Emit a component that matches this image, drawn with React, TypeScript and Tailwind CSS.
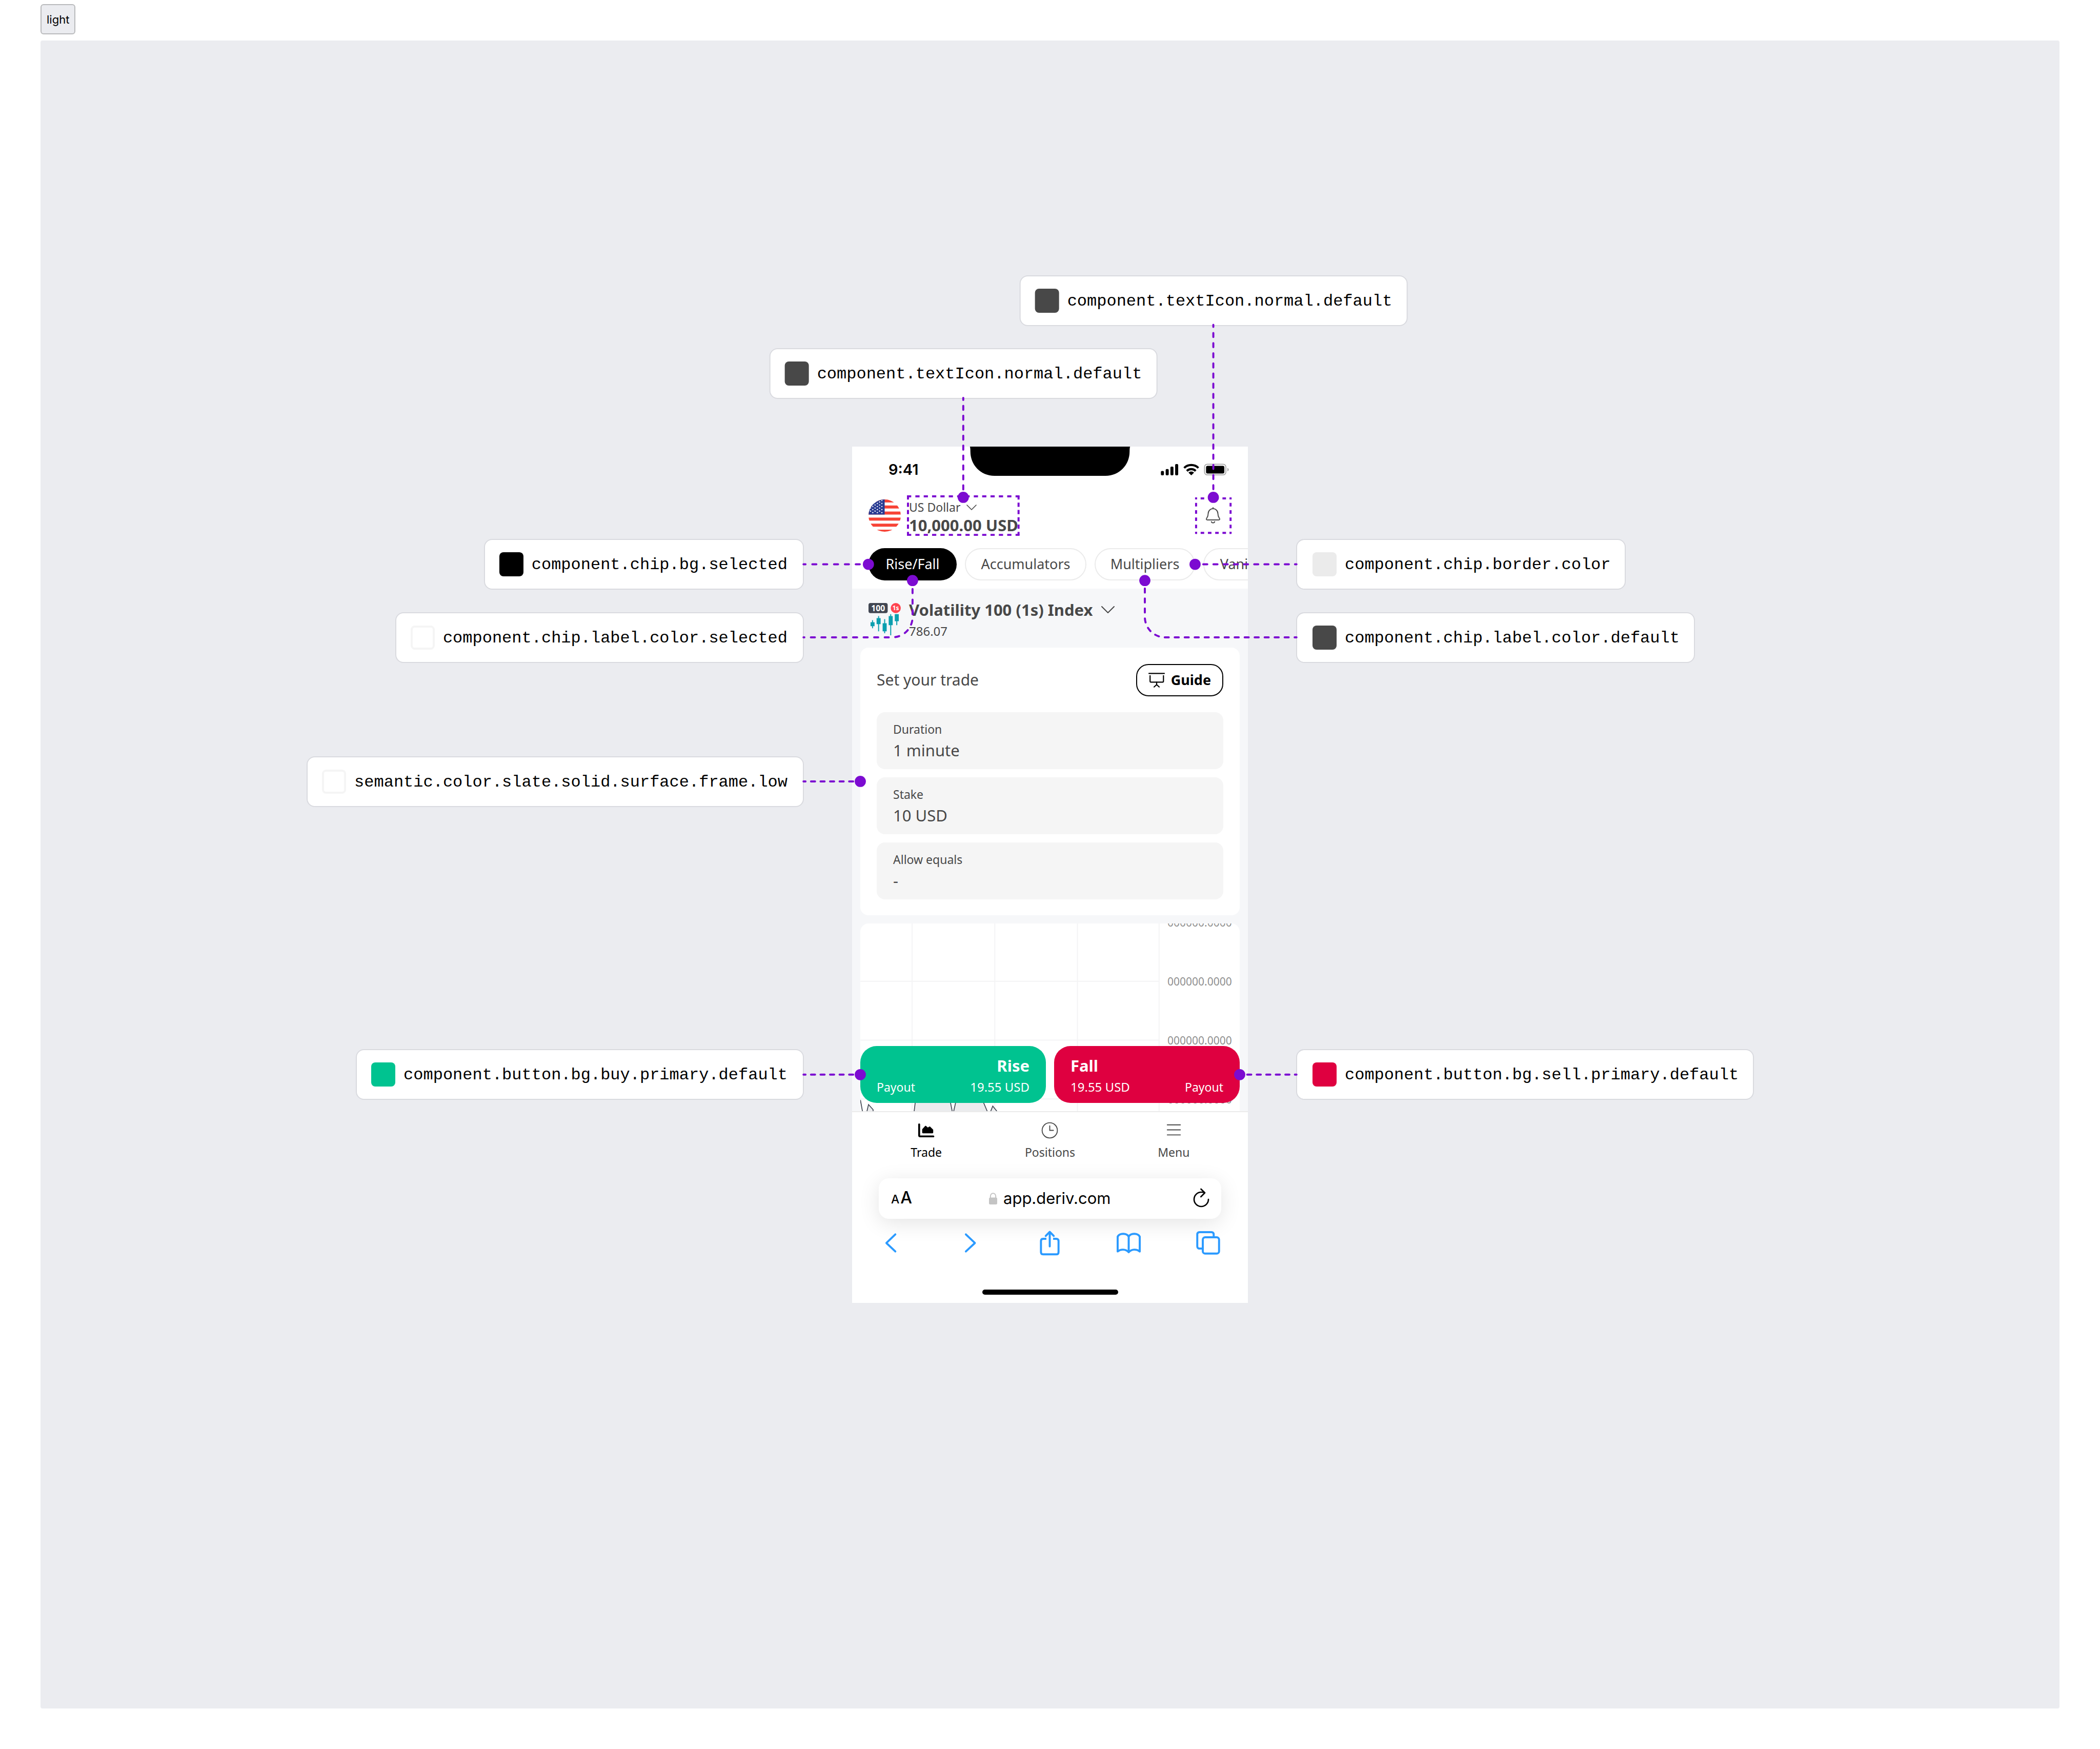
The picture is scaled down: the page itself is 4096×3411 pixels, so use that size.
import React from "react";
import type { ReactNode } from "react";

const sans = "font-['Noto_Sans',sans-serif]";
const mono = "font-['Liberation_Mono',monospace]";

type TokenProps = { name: string; swatch: string; place: string };

function Token({ name, swatch, place }: TokenProps) {
  return (
    <div
      className={`absolute ${place} flex h-[99px] items-center gap-4 rounded-2xl border-2 border-[#d9dadf] bg-white whitespace-nowrap`}
    >
      <span className={`size-[47px] shrink-0 rounded-lg ${swatch}`} />
      <code className={`${mono} pt-1 text-[32px] leading-10 text-black`}>{name}</code>
    </div>
  );
}

const tokens: TokenProps[] = [
  { name: "component.textIcon.normal.default", swatch: "bg-[#484848]", place: "left-[705px] -top-[334px] -translate-x-1/2 px-7" },
  { name: "component.textIcon.normal.default", swatch: "bg-[#484848]", place: "left-[217px] -top-[192px] -translate-x-1/2 px-7" },
  { name: "component.chip.bg.selected", swatch: "bg-black", place: "right-full mr-[94px] top-[180px] pr-[30px] pl-7" },
  { name: "component.chip.label.color.selected", swatch: "border-4 border-[#f5f5f5] bg-white", place: "right-full mr-[94px] top-[323px] pr-[30px] pl-7" },
  { name: "semantic.color.slate.solid.surface.frame.low", swatch: "border-4 border-[#f5f5f5] bg-white", place: "right-full mr-[94px] top-[604px] pr-[30px] pl-7" },
  { name: "component.button.bg.buy.primary.default", swatch: "bg-[#00c390]", place: "right-full mr-[94px] top-[1175px] pr-[30px] pl-7" },
  { name: "component.chip.border.color", swatch: "bg-[#ebebeb]", place: "left-full ml-[94px] top-[180px] pr-7 pl-[30px]" },
  { name: "component.chip.label.color.default", swatch: "bg-[#484848]", place: "left-full ml-[94px] top-[323px] pr-7 pl-[30px]" },
  { name: "component.button.bg.sell.primary.default", swatch: "bg-[#df0040]", place: "left-full ml-[94px] top-[1175px] pr-7 pl-[30px]" },
];

function Connectors() {
  return (
    <svg viewBox="0 0 780 1688" className="pointer-events-none absolute inset-0 size-full overflow-visible" fill="none" stroke="#7c0bd1" strokeWidth="4" aria-hidden="true">
      <g strokeLinecap="round" strokeDashoffset="4">
        <path d="M712 -240V100" strokeDasharray="8 12" />
        <path d="M219 -96V100" strokeDasharray="8 11.6" />
        <path d="M-96 232H32" strokeDasharray="8 13.4" />
        <path d="M119 264V336A40 40 0 0 1 79 376H-96" strokeDasharray="8 12.8" />
        <path d="M-96 660H16" strokeDasharray="8 10.8" />
        <path d="M-96 1238H16" strokeDasharray="8 10.8" />
        <path d="M676 232H876" strokeDasharray="8 12.1" />
        <path d="M577 264V336A40 40 0 0 0 617 376H876" strokeDasharray="8 11.7" />
        <path d="M764 1238H876" strokeDasharray="8 10.8" />
      </g>
      <g strokeDasharray="8.3 8.16" strokeDashoffset="1.9">
        <path d="M110 98H328" />
        <path d="M110 174H328" />
      </g>
      <g strokeDasharray="8.3 6.1" strokeDashoffset="2">
        <path d="M110 98V174" />
        <path d="M328 98V174" />
      </g>
      <path d="M108 98H112M326 98H330M108 174H112M326 174H330" />
      <g strokeDasharray="7 7.33" strokeDashoffset="5.33">
        <path d="M678 102H746" />
        <path d="M678 170H746" />
        <path d="M678 102V170" />
        <path d="M746 102V170" />
      </g>
      <path d="M676 102H680M744 102H748M676 170H680M744 170H748" />
      <g fill="#7c0bd1" stroke="none">
        <circle cx="712" cy="100" r="11" />
        <circle cx="219" cy="100" r="11" />
        <circle cx="32" cy="232" r="11" />
        <circle cx="119" cy="264" r="11" />
        <circle cx="16" cy="660" r="11" />
        <circle cx="16" cy="1238" r="11" />
        <circle cx="676" cy="232" r="11" />
        <circle cx="577" cy="264" r="11" />
        <circle cx="764" cy="1238" r="11" />
      </g>
    </svg>
  );
}

function Flag() {
  return (
    <svg viewBox="0 0 64 64" className="size-[63px] shrink-0" role="img" aria-label="United States flag">
      <clipPath id="flag-disc">
        <circle cx="32" cy="32" r="32" />
      </clipPath>
      <g clipPath="url(#flag-disc)">
        <rect width="64" height="64" fill="#fff" />
        {[0, 12, 24, 36, 48, 60].map((y) => (
          <rect key={y} y={y} width="64" height="6" fill="#f74336" />
        ))}
        <rect width="32" height="30" fill="#283a92" />
        {[2, 8, 14, 20, 26].flatMap((y) =>
          [8.5, 17.5, 26.5].map((x) => (
            <path key={`${x}-${y}`} transform={`translate(${x} ${y})`} d="M0-1.8.5-.6 1.8-.5.8.4 1.1 1.6 0 1-1.1 1.6-.8.4-1.8-.5-.5-.6Z" fill="#fff" />
          ))
        )}
        {[5, 11, 17, 23].flatMap((y) =>
          [4, 13, 22].map((x) => (
            <path key={`${x}-${y}`} transform={`translate(${x} ${y})`} d="M0-1.8.5-.6 1.8-.5.8.4 1.1 1.6 0 1-1.1 1.6-.8.4-1.8-.5-.5-.6Z" fill="#fff" />
          ))
        )}
      </g>
    </svg>
  );
}

function StatusBar() {
  return (
    <div className="relative flex h-[87px] items-center justify-between pt-1 pr-9 pl-[71px]">
      <span className="font-[Inter,sans-serif] text-[29px] leading-9 font-semibold text-black">9:41</span>
      <svg viewBox="0 0 318 58" className="absolute top-0 left-1/2 h-[57px] w-[315px] -translate-x-1/2" aria-hidden="true">
        <path d="M0 0H318Q317 2 317 10C317 36 297 58 269 58H49C21 58 1 36 1 10Q1 2 0 0Z" />
      </svg>
      <svg viewBox="0 0 136 28" className="h-7 w-[135px]" aria-hidden="true">
        <rect x="1.3" y="16.5" width="6" height="8.5" rx="2" />
        <rect x="10.7" y="12.7" width="6" height="12.3" rx="2" />
        <rect x="20" y="8" width="6" height="17" rx="2" />
        <rect x="29.3" y="3" width="6" height="22" rx="2" />
        <g fill="none" stroke="#000" strokeWidth="4.2">
          <path d="M47 10.6A20 20 0 0 1 75 10.6" />
          <path d="M52.3 16.4A12.5 12.5 0 0 1 69.7 16.4" />
        </g>
        <path d="M61 25.2 55.5 19.8A8 8 0 0 1 66.5 19.8Z" />
        <rect x="87" y="3.2" width="42" height="21" rx="5.5" fill="none" stroke="#a6a6a6" strokeWidth="1.8" />
        <path d="M132 10.5Q134.7 12 134.7 14T132 17.5Z" fill="#a6a6a6" />
        <rect x="90" y="6.5" width="36" height="15" rx="3" />
      </svg>
    </div>
  );
}

function AccountHeader() {
  return (
    <div className="flex h-[95px] items-center gap-4 px-8">
      <Flag />
      <button type="button" className="flex flex-col items-start pt-1 text-[#484848]">
        <span className="flex items-center gap-3 text-[23px] leading-[35px]">
          US Dollar
          <svg viewBox="0 0 20 11" className="h-[11px] w-5" fill="none" stroke="currentColor" strokeWidth="1.6" strokeLinecap="round" strokeLinejoin="round" aria-hidden="true">
            <path d="M1 1 10 10 19 1" />
          </svg>
        </span>
        <span className="text-[31px] leading-[35px] font-bold">10,000.00 USD</span>
      </button>
      <button type="button" aria-label="Notifications" className="mr-5 ml-auto">
        <svg viewBox="0 0 32 32" className="size-8" fill="none" stroke="#484848" strokeWidth="1.9" strokeLinecap="round">
          <path d="M5 25H27C29 25 29.6 23.5 28.5 22C26.5 19.3 25.5 17 25.5 13C25.5 7 21 3 16 3C11 3 6.5 7 6.5 13C6.5 17 5.5 19.3 3.5 22C2.4 23.5 3 25 5 25ZM16 3V1M12.8 28.5C13.5 31.3 18.5 31.3 19.2 28.5" />
        </svg>
      </button>
    </div>
  );
}

function Chips() {
  const outlined = "border-2 border-[#ebebeb] text-[#484848]";
  const chips = [
    { label: "Rise/Fall", look: "w-[172px] bg-black text-white" },
    { label: "Accumulators", look: `w-[237px] ${outlined}` },
    { label: "Multipliers", look: `w-[196px] ${outlined}` },
    { label: "Vanillas", look: `w-[162px] ${outlined}` },
  ];
  return (
    <div className="flex gap-4 overflow-hidden pb-4 pl-8">
      {chips.map((c) => (
        <button key={c.label} type="button" className={`h-[63px] shrink-0 rounded-full text-center text-[27px] leading-9 ${c.look}`}>
          {c.label}
        </button>
      ))}
    </div>
  );
}

function IndexIcon() {
  return (
    <svg viewBox="0 0 64 64" className="mt-2 size-[63px] shrink-0" aria-hidden="true">
      <rect width="38" height="20" rx="4" fill="#414652" />
      <text x="19" y="16" textAnchor="middle" fontSize="16" fontWeight="700" fill="#fff">100</text>
      <circle cx="54" cy="10" r="10" fill="#ff444f" />
      <text x="54" y="14" textAnchor="middle" fontSize="12" fontWeight="700" fill="#fff">1s</text>
      <g fill="#0c9faf">
        <path d="M4 38h8v8H4zM16 30h8v12h-8zM28 40h8v16h-8zM40 26h8v18h-8zM52 22h8v14h-8z" />
        <path d="M7 34h2v16H7zM19 26h2v30h-2zM31 32h2v28h-2zM43 22h2v42h-2zM55 22h2v22h-2z" />
      </g>
    </svg>
  );
}

function MarketSelector() {
  return (
    <div className="flex h-[115px] items-start gap-4 px-8 pt-5 text-[#484848]">
      <IndexIcon />
      <div>
        <button type="button" className="flex items-center gap-4 text-[31px] leading-[42px] font-bold">
          Volatility 100 (1s) Index
          <svg viewBox="0 0 28 16" className="h-4 w-7" fill="none" stroke="currentColor" strokeWidth="2" strokeLinecap="round" strokeLinejoin="round" aria-hidden="true">
            <path d="M2 2 14 14 26 2" />
          </svg>
        </button>
        <p className="text-[24px] leading-[42px]">786.07</p>
      </div>
    </div>
  );
}

function Field({ id, label, value }: { id: string; label: string; value: string }) {
  return (
    <div className="flex h-[111px] flex-col justify-center rounded-2xl bg-[#f5f5f5] px-8 text-[#484848]">
      <label htmlFor={id} className="text-[23px] leading-[38px]">{label}</label>
      <input id={id} readOnly value={value} className="h-11 w-full bg-transparent text-[31px] leading-[44px] outline-none" />
    </div>
  );
}

function TradeForm() {
  return (
    <section className="mx-4 flex flex-col gap-4 rounded-2xl bg-white px-8 pt-8 pb-[31px]">
      <div className="mb-[15px] flex items-center justify-between">
        <h2 className="text-[30px] leading-10 text-[#484848]">Set your trade</h2>
        <button type="button" className="flex h-[63px] items-center gap-3 rounded-3xl border-2 border-black px-[22px] text-[27px] leading-9 font-bold text-black">
          <svg viewBox="0 0 32 32" className="size-8" fill="none" stroke="currentColor" strokeWidth="2.2" strokeLinecap="round" strokeLinejoin="round" aria-hidden="true">
            <path d="M1 3.3H31" />
            <path d="M3.2 7V18.5Q3.2 20.3 5 20.3H27.5Q29.3 20.3 29.3 18.5V7" strokeLinecap="butt" />
            <path d="M16 20.3V25.2M11 29.7 16 25.2 21 29.7" />
          </svg>
          Guide
        </button>
      </div>
      <Field id="duration" label="Duration" value="1 minute" />
      <Field id="stake" label="Stake" value="10 USD" />
      <Field id="allow-equals" label="Allow equals" value="-" />
    </section>
  );
}

function Chart() {
  return (
    <div className="flex h-full overflow-hidden rounded-t-2xl bg-white">
      <svg viewBox="0 0 590 370" className="h-full w-[584px] shrink-0" aria-hidden="true">
        <path d="M106 370 111 330H173L181 370ZM184 370 193 330H233L250 370ZM13 370 16 357 25 367V370ZM257 370 261 360 269 370Z" fill="#ebecee" />
        <g stroke="#f4f4f5" strokeWidth="2">
          <path d="M102 0V370M265 0V370M428 0V370M589 0V370M0 114H590M0 230H590M0 346H590" />
        </g>
        <path d="M0 348 4 370M13 370 16 357 25 367V371M106 370 111 330M173 330 181 370M184 370 193 330M233 330 250 370M257 370 261 360 269 370" fill="none" stroke="#414652" strokeWidth="1.7" />
      </svg>
      <div className="-mt-[59px] flex flex-col pl-[15px] text-[21px] text-[#8f8f8f]">
        {[0, 1, 2, 3].map((i) => (
          <span key={i} className="h-[115px] shrink-0 leading-[115px]">000000.0000</span>
        ))}
      </div>
    </div>
  );
}

function TradeButtons() {
  return (
    <div className="absolute inset-x-0 bottom-4 grid grid-cols-2 gap-4 text-white">
      <button type="button" className="flex h-[111px] flex-col justify-center rounded-[32px] bg-[#00c390] px-8 pt-2">
        <span className="text-right text-[31px] leading-[42px] font-bold">Rise</span>
        <span className="flex justify-between leading-[42px]">
          <span className="text-[23px]">Payout</span>
          <span className="text-[24px]">19.55 USD</span>
        </span>
      </button>
      <button type="button" className="flex h-[111px] flex-col justify-center rounded-[32px] bg-[#df0040] px-8 pt-2">
        <span className="text-left text-[31px] leading-[42px] font-bold">Fall</span>
        <span className="flex justify-between leading-[42px]">
          <span className="text-[24px]">19.55 USD</span>
          <span className="text-[23px]">Payout</span>
        </span>
      </button>
    </div>
  );
}

function NavItem({ label, look, children }: { label: string; look: string; children: ReactNode }) {
  return (
    <a href="#" className={`flex flex-col items-center text-[23px] leading-[38px] ${look}`}>
      <svg viewBox="0 0 48 48" className="size-[47px]" fill="none" stroke="currentColor" strokeWidth="1.9" strokeLinecap="round" strokeLinejoin="round" aria-hidden="true">
        {children}
      </svg>
      {label}
    </a>
  );
}

function AppNav() {
  return (
    <nav className="grid h-[109px] grid-cols-3 border-t-2 border-[#ebebeb] bg-white px-6 pt-3">
      <NavItem label="Trade" look="text-black">
        <path d="M10 12V34Q10 36 12 36H38.3" strokeWidth="3.8" />
        <path d="M17.5 22.5 22.8 16.5 27.3 20.3 30.8 17.8 36.5 23.3V28.3H17.5Z" fill="currentColor" strokeWidth="3" />
      </NavItem>
      <NavItem label="Positions" look="text-[#484848]">
        <circle cx="24" cy="24" r="15.2" />
        <path d="M24 15V24H31.3" strokeLinejoin="miter" />
      </NavItem>
      <NavItem label="Menu" look="text-[#484848]">
        <path d="M11 13H37M11 23H37M11 33H37" />
      </NavItem>
    </nav>
  );
}

function ToolButton({ label, children }: { label: string; children: ReactNode }) {
  return (
    <button type="button" aria-label={label}>
      <svg viewBox="0 0 48 60" className="h-[59px] w-[47px]" fill="none" stroke="#2b9aff" strokeWidth="4" strokeLinecap="round" strokeLinejoin="round">
        {children}
      </svg>
    </button>
  );
}

function BrowserBar() {
  return (
    <div className="flex flex-1 flex-col bg-white pt-[22px]">
      <div className="mx-[52px] flex h-[79px] items-center justify-between rounded-[20px] bg-white pr-[19px] pl-6 font-[Inter,sans-serif] text-black shadow-[0_8px_40px_rgba(0,0,0,0.11)]">
        <button type="button" aria-label="Text size" className="flex items-baseline gap-[2px] leading-10 font-medium">
          <span className="text-[23px]">A</span>
          <span className="text-[32px]">A</span>
        </button>
        <div className="flex items-center gap-3">
          <svg viewBox="0 0 16 23" className="h-[23px] w-4" aria-hidden="true">
            <rect y="9.5" width="16" height="13.5" rx="2.5" fill="#c4c4c4" />
            <path d="M2.8 10.5V7A5.2 5.8 0 0 1 13.2 7V10.5" fill="none" stroke="#c4c4c4" strokeWidth="2" />
          </svg>
          <input aria-label="Address" readOnly value="app.deriv.com" className="w-[216px] bg-transparent text-[31px] leading-10 outline-none" />
        </div>
        <button type="button" aria-label="Reload">
          <svg viewBox="0 0 40 40" className="size-10" fill="none" stroke="currentColor" strokeWidth="2.7" strokeLinecap="round" strokeLinejoin="round">
            <path d="M34 22A14 14 0 1 1 20 8Q24 8 27 9.3M19.5 2 27 9.3 19.3 17" />
          </svg>
        </button>
      </div>
      <div className="mt-[18px] flex justify-between pr-[54px] pl-[52px]">
        <ToolButton label="Back">
          <path d="M33 12.5 15.2 29.7 33 46.5" />
        </ToolButton>
        <ToolButton label="Forward">
          <path d="M15.2 12.5 33.2 29.7 15.2 46.5" />
        </ToolButton>
        <ToolButton label="Share">
          <path d="M17.3 21.3H11Q6.5 21.3 6.5 26V47.5Q6.5 52.2 11 52.2H37Q41.5 52.2 41.5 47.5V26Q41.5 21.3 37 21.3H30.7" strokeLinecap="butt" />
          <path d="M24 8V36.5M16 15.5 24 7.5 32 15.5" />
        </ToolButton>
        <ToolButton label="Bookmarks">
          <path d="M24 17C20 9.5 6 9.5 2 17V46.5C8 41.5 18 41.5 24 48C30 41.5 40 41.5 46 46.5V17C42 9.5 28 9.5 24 17V47" />
        </ToolButton>
        <ToolButton label="Tabs">
          <path d="M13.3 40.7H7Q2.3 40.7 2.3 36V12.7Q2.3 8 7 8H30.3Q35 8 35 12.7V18.3" strokeLinecap="butt" />
          <rect x="13.3" y="18.3" width="32.4" height="32.4" rx="4.7" />
        </ToolButton>
      </div>
      <div className="mt-auto mb-4 h-[10px] w-[265px] self-center rounded-full bg-black" />
    </div>
  );
}

function Phone() {
  return (
    <div className={`${sans} flex h-full flex-col overflow-hidden bg-[#f6f7f9]`}>
      <header className="bg-white">
        <StatusBar />
        <AccountHeader />
        <div className="pt-4">
          <Chips />
        </div>
      </header>
      <MarketSelector />
      <TradeForm />
      <div className="relative mx-4 mt-4 h-[366px] shrink-0">
        <Chart />
        <TradeButtons />
      </div>
      <AppNav />
      <BrowserBar />
    </div>
  );
}

export default function App() {
  return (
    <div className="flex min-h-screen flex-col items-start bg-white px-[79px] pt-2 pb-[79px]">
      <span className="mb-3 flex h-[59px] items-center rounded-md border-2 border-[#b9babc] bg-[#ebecf0] px-[10px] font-[Inter,sans-serif] text-[22px] leading-8 text-black">
        light
      </span>
      <main className="flex w-full flex-1 items-center justify-center rounded bg-[#ebecf0]">
        <div className="relative h-[1670px] w-[772px]">
          <Phone />
          {tokens.map((t) => (
            <Token key={t.place} {...t} />
          ))}
          <Connectors />
        </div>
      </main>
    </div>
  );
}
